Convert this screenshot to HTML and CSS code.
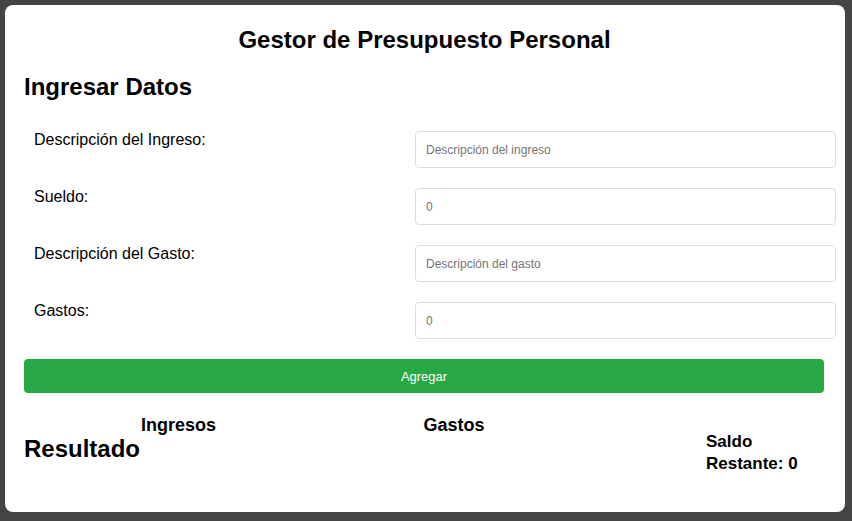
FILE: index.html
```html
<!DOCTYPE html>
<html lang="es">
<head>
<meta charset="utf-8">
<title>Gestor de Presupuesto Personal</title>
<link rel="stylesheet" href="styles.css">
</head>
<body>
<main class="card">
  <h1 class="title">Gestor de Presupuesto Personal</h1>
  <h2 class="section-title">Ingresar Datos</h2>
  <form class="form">
    <div class="row">
      <label class="label" for="descIngreso">Descripción del Ingreso:</label>
      <input class="input" id="descIngreso" type="text" placeholder="Descripción del ingreso">
    </div>
    <div class="row">
      <label class="label" for="sueldo">Sueldo:</label>
      <input class="input" id="sueldo" type="number" placeholder="0">
    </div>
    <div class="row">
      <label class="label" for="descGasto">Descripción del Gasto:</label>
      <input class="input" id="descGasto" type="text" placeholder="Descripción del gasto">
    </div>
    <div class="row">
      <label class="label" for="gastos">Gastos:</label>
      <input class="input" id="gastos" type="number" placeholder="0">
    </div>
    <button class="btn" type="button">Agregar</button>
  </form>
  <section class="results">
    <h2 class="results-title">Resultado</h2>
    <div class="col">
      <h3 class="col-title">Ingresos</h3>
    </div>
    <div class="col">
      <h3 class="col-title">Gastos</h3>
    </div>
    <div class="saldo">
      <h3 class="saldo-title">Saldo Restante: 0</h3>
    </div>
  </section>
</main>
</body>
</html>
```

FILE: styles.css
```css
html, body {
  margin: 0;
  padding: 0;
}
body {
  background: #444444;
  font-family: "Liberation Sans", Arial, sans-serif;
  color: #000;
  padding: 5px 7px 9px 5px;
  height: 521px;
  box-sizing: border-box;
}
.card {
  background: #fff;
  border-radius: 8px;
  height: 507px;
  box-sizing: border-box;
  padding: 24px 20px 20px 19px;
}
.title {
  font-size: 24px;
  font-weight: bold;
  text-align: center;
  margin: 0;
  line-height: 22px;
}
.section-title {
  font-size: 24px;
  font-weight: bold;
  margin: 22px 0 30px;
  line-height: 28px;
}
.form {
  display: flex;
  flex-direction: column;
}
.row {
  display: grid;
  grid-template-columns: 391px 421px;
  margin-bottom: 20px;
}
.label {
  font-size: 16px;
  padding: 0 10px;
  line-height: 18px;
}
.input {
  height: 37px;
  box-sizing: border-box;
  border: 1px solid #dddddd;
  border-radius: 4px;
  padding: 0 10px;
  font-family: "Liberation Sans", Arial, sans-serif;
  font-size: 12px;
}
.input::placeholder {
  color: #757575;
}
.btn {
  width: 800px;
  height: 34px;
  background: #28a745;
  color: #fff;
  border: none;
  border-radius: 4px;
  font-family: "Liberation Sans", Arial, sans-serif;
  font-size: 13px;
  margin-top: 0;
}
.results {
  display: flex;
  align-items: flex-start;
  margin-top: 22px;
}
.results-title {
  font-size: 24px;
  font-weight: bold;
  margin: 20px 1px 0 0;
  line-height: 28px;
}
.col {
  flex: 1;
}
.col-title {
  font-size: 18px;
  font-weight: bold;
  margin: 0;
}
.saldo {
  width: 119px;
}
.saldo-title {
  font-size: 17px;
  font-weight: bold;
  margin: 16px 0 0;
  line-height: 22px;
}
```
